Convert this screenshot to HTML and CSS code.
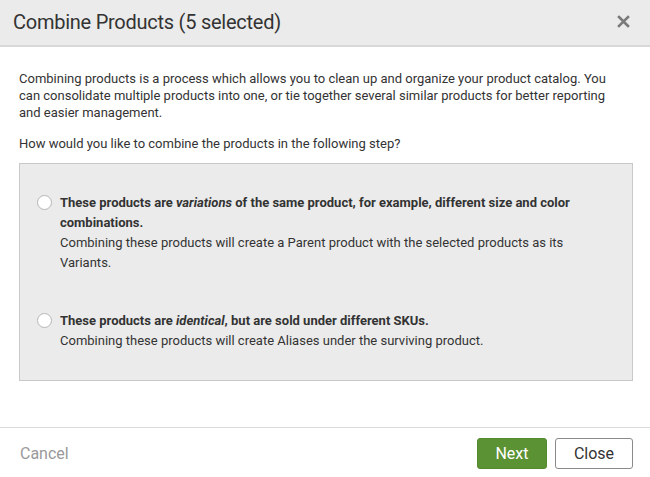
FILE: index.html
```html
<!DOCTYPE html>
<html>
<head>
<meta charset="utf-8">
<link rel="stylesheet" href="styles.css">
</head>
<body>
<div class="dialog">
  <div class="header">
    <h1 class="title">Combine Products (5 selected)</h1>
    <button class="close-x" aria-label="Close">
      <svg width="13" height="13" viewBox="0 0 13 13"><path d="M2 2 L11 11 M11 2 L2 11" stroke="#7a7a7a" stroke-width="2.6" stroke-linecap="square"/></svg>
    </button>
  </div>
  <div class="content">
    <p class="intro">Combining products is a process which allows you to clean up and organize your product catalog. You can consolidate multiple products into one, or tie together several similar products for better reporting and easier management.</p>
    <p class="question">How would you like to combine the products in the following step?</p>
    <div class="options">
      <label class="option">
        <span class="radio"></span>
        <span class="option-text">
          <strong>These products are <em>variations</em> of the same product, for example, different size and color combinations.</strong>
          <span class="desc">Combining these products will create a Parent product with the selected products as its Variants.</span>
        </span>
      </label>
      <label class="option">
        <span class="radio"></span>
        <span class="option-text">
          <strong>These products are <em>identical</em>, but are sold under different SKUs.</strong>
          <span class="desc">Combining these products will create Aliases under the surviving product.</span>
        </span>
      </label>
    </div>
  </div>
  <div class="footer">
    <span class="cancel">Cancel</span>
    <div class="actions">
      <button class="btn btn-next">Next</button>
      <button class="btn btn-close">Close</button>
    </div>
  </div>
</div>
</body>
</html>
```

FILE: styles.css
```css
* { box-sizing: border-box; }
html, body { margin: 0; padding: 0; }
body {
  font-family: Roboto, "Liberation Sans", sans-serif;
  color: #333;
  background: #fff;
}
.dialog {
  display: flex;
  flex-direction: column;
  height: 477px;
}
.header {
  height: 47px;
  background: #ebebeb;
  border-bottom: 2px solid #d8d8d8;
  display: flex;
  align-items: center;
  justify-content: space-between;
  padding: 0 20px 2px 13px;
}
.title {
  margin: 0;
  font-size: 20px;
  font-weight: 400;
  color: #333;
  letter-spacing: -0.25px;
}
.close-x {
  background: none;
  border: 0;
  padding: 0;
  display: flex;
  cursor: pointer;
}
.content {
  flex: 1;
  padding: 23px 17px 0 19px;
  font-size: 13px;
}
.intro {
  margin: 0;
  max-width: 598px;
  line-height: 17px;
}
.question {
  margin: 14px 0 11px;
  line-height: 17px;
}
.options {
  background: #ebebeb;
  border: 1px solid #c9c9c9;
  padding: 29px 20px 29px 17px;
  display: flex;
  flex-direction: column;
  gap: 38px;
}
.option {
  display: flex;
  align-items: flex-start;
  gap: 8px;
  line-height: 20px;
}
.radio {
  flex: none;
  width: 15px;
  height: 15px;
  border-radius: 50%;
  border: 1px solid #b5b5b5;
  background: #fff;
  margin-top: 2px;
}
.option-text strong {
  display: block;
  font-weight: 700;
}
.desc {
  display: block;
}
.footer {
  height: 50px;
  border-top: 1px solid #dadada;
  display: flex;
  align-items: center;
  justify-content: space-between;
  padding: 1px 17px 0 20px;
}
.cancel {
  font-size: 16px;
  color: #999;
}
.actions {
  display: flex;
  gap: 8px;
}
.btn {
  font-family: Roboto, "Liberation Sans", sans-serif;
  font-size: 16px;
  height: 31px;
  border-radius: 3px;
  padding: 0;
  cursor: pointer;
}
.btn-next {
  width: 70px;
  background: #5b9234;
  border: 1px solid #548a2f;
  color: #fff;
}
.btn-close {
  width: 78px;
  background: #fff;
  border: 1px solid #8a8a8a;
  color: #333;
}
```
